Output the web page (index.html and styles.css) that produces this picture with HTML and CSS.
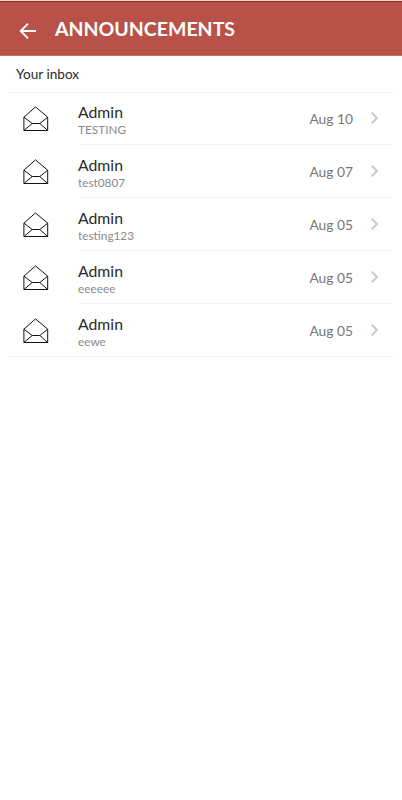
FILE: index.html
```html
<!DOCTYPE html>
<html lang="en">
<head>
<meta charset="utf-8">
<title>Announcements</title>
<link rel="stylesheet" href="styles.css">
</head>
<body>
<svg class="defs" width="0" height="0" aria-hidden="true">
  <symbol id="mail" viewBox="0 0 26 26">
    <path d="M.9 11.2 12.5.9l12.2 10.3v13.3H.9zM.9 11.2l8.3 6.3h7.6l7.9-6.3M.9 24.5l8.3-7M24.7 24.5l-7.9-7"/>
  </symbol>
  <symbol id="chevron" viewBox="0 0 10 14">
    <path d="M1.7 1.6 7 7l-5.3 5.4"/>
  </symbol>
</svg>
<header class="bar">
  <svg class="back" viewBox="0 0 18 18"><path d="M17 9H2M9 1.7 1.7 9 9 16.3"/></svg>
  <h1 class="title">ANNOUNCEMENTS</h1>
</header>
<main class="inbox">
  <h2 class="heading">Your inbox</h2>
  <ul class="list">
    <li class="item"><svg class="mail"><use href="#mail"/></svg><div class="content"><div class="message"><div class="sender">Admin</div><div class="subject">TESTING</div></div><time class="date">Aug 10</time><svg class="chevron"><use href="#chevron"/></svg></div></li>
    <li class="item"><svg class="mail"><use href="#mail"/></svg><div class="content"><div class="message"><div class="sender">Admin</div><div class="subject">test0807</div></div><time class="date">Aug 07</time><svg class="chevron"><use href="#chevron"/></svg></div></li>
    <li class="item"><svg class="mail"><use href="#mail"/></svg><div class="content"><div class="message"><div class="sender">Admin</div><div class="subject">testing123</div></div><time class="date">Aug 05</time><svg class="chevron"><use href="#chevron"/></svg></div></li>
    <li class="item"><svg class="mail"><use href="#mail"/></svg><div class="content"><div class="message"><div class="sender">Admin</div><div class="subject">eeeeee</div></div><time class="date">Aug 05</time><svg class="chevron"><use href="#chevron"/></svg></div></li>
    <li class="item"><svg class="mail"><use href="#mail"/></svg><div class="content"><div class="message"><div class="sender">Admin</div><div class="subject">eewe</div></div><time class="date">Aug 05</time><svg class="chevron"><use href="#chevron"/></svg></div></li>
  </ul>
</main>
</body>
</html>
```
FILE: styles.css
```css
* { box-sizing: border-box; }
body {
  margin: 0;
  min-height: 800px;
  background: #fff;
  font-family: Lato, "Liberation Sans", sans-serif;
  color: #2a2a2a;
  border-top: 1px solid #e4dfda;
}
.defs { display: block; }
svg { fill: none; flex: none; }
.bar {
  height: 55px;
  display: flex;
  align-items: center;
  padding: 2px 0 0 19px;
  background: #b85248;
  border-top: 1px solid #a02214;
  border-bottom: 1px solid #c4736b;
}
.back { width: 18px; height: 18px; margin-top: 3px; stroke: #fff; stroke-width: 1.9; }
.title { margin: -2px 0 0 18px; font-size: 19.5px; line-height: 24px; font-weight: 700; color: #fff; }
.inbox { padding: 0 8px; }
.heading { margin: 0; height: 36px; padding: 9px 0 0 8px; font-size: 13.6px; line-height: 18px; font-weight: 400; }
.list { margin: 0; padding: 0; list-style: none; border-top: 1px solid #f1f1f1; border-bottom: 1px solid #f1f1f1; }
.item { height: 53px; display: flex; }
.item:first-child, .item:last-child { height: 52px; }
.mail { width: 26px; height: 26px; margin: 14px 29px 0 15px; stroke: #111; stroke-width: 1; }
.item:first-child .mail { margin-top: 13px; }
.content { flex: 1; display: flex; padding-top: 10px; border-bottom: 1px solid #f3f3f3; }
.item:first-child .content { padding-top: 9px; }
.item:last-child .content { border-bottom: 0; }
.message { flex: 1; }
.sender { margin-top: -1px; font-size: 15.8px; line-height: 21px; }
.subject { font-size: 11.8px; line-height: 15px; color: #8a8a8a; }
.date { margin: 8px 17px 0 0; font-size: 13.8px; line-height: 18px; color: #777; }
.chevron { width: 10px; height: 14px; margin: 9px 14px 0 0; stroke: #c8c8c8; stroke-width: 2; }
```
